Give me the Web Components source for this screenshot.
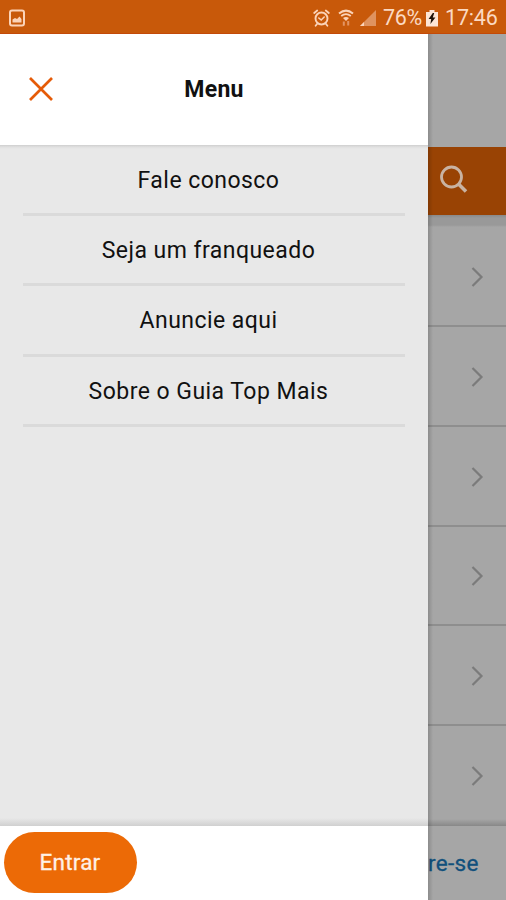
<!DOCTYPE html>
<html lang="pt-BR">
<head>
<meta charset="UTF-8">
<meta name="viewport" content="width=device-width, initial-scale=1">
<title>Guia Top Mais</title>
<style>
    body {
        margin: 0;
        font-family: Roboto, "Liberation Sans", sans-serif;
    }
</style>
</head>
<body>
<app-shell>
    <status-bar slot="status" battery="76%" time="17:46"></status-bar>
    <side-menu slot="menu" heading="Menu">
        <menu-item>Fale conosco</menu-item>
        <menu-item>Seja um franqueado</menu-item>
        <menu-item>Anuncie aqui</menu-item>
        <menu-item>Sobre o Guia Top Mais</menu-item>
        <pill-button slot="footer">Entrar</pill-button>
    </side-menu>
    <dimmed-page slot="page">
        <list-row></list-row>
        <list-row></list-row>
        <list-row></list-row>
        <list-row></list-row>
        <list-row></list-row>
        <list-row></list-row>
        <span slot="footer">re-se</span>
    </dimmed-page>
</app-shell>

<script>
class AppShell extends HTMLElement {
    connectedCallback() {
        this.attachShadow({ mode: 'open' });
        this.shadowRoot.innerHTML = `
            <style>
                :host {
                    display: grid;
                    grid-template: 34px 1fr / 428px 1fr;
                    height: 100vh;
                    overflow: hidden;
                }
                slot[name="status"]::slotted(*) {
                    grid-column: 1 / -1;
                }
            </style>
            <slot name="status"></slot>
            <slot name="menu"></slot>
            <slot name="page"></slot>
        `;
    }
}
customElements.define('app-shell', AppShell);

class StatusBar extends HTMLElement {
    connectedCallback() {
        this.attachShadow({ mode: 'open' });
        this.shadowRoot.innerHTML = `
            <style>
                :host {
                    display: flex;
                    align-items: center;
                    box-sizing: border-box;
                    padding: 2px 8px 0 8px;
                    background: #c8590a;
                    border-bottom: 1px solid #c34a08;
                    color: #fbd9c2;
                    font-size: 21.5px;
                    line-height: 31px;
                }
                svg {
                    display: block;
                    flex: none;
                }
                .picture {
                    margin-right: auto;
                }
                .alarm {
                    margin-right: 8px;
                }
                .wifi {
                    margin-right: 5px;
                }
                .signal {
                    margin-right: 6px;
                }
                .battery {
                    margin: 0 7px 0 4px;
                }
                .level {
                    width: 39px;
                    letter-spacing: -0.35px;
                    white-space: nowrap;
                }
                .time {
                    width: 53px;
                    letter-spacing: -0.2px;
                    white-space: nowrap;
                }
            </style>
            <svg class="picture" width="18" height="18" viewBox="0 0 18 18">
                <rect x="2" y="1.5" width="14" height="15" rx="2" fill="none" stroke="#fbd3b8" stroke-width="2"/>
                <path d="M4.5 13.5V10.5L7 9L9 10L11.5 7.5L13.5 10V13.5Z" fill="#fbd3b8"/>
            </svg>
            <svg class="alarm" width="17" height="18" viewBox="0 0 17 18" fill="none" stroke="#fbd3b8" stroke-linecap="round">
                <circle cx="8.5" cy="9.5" r="6" stroke-width="1.9"/>
                <path d="M1.2 4L4.2 1.5M15.8 4L12.8 1.5M4 15L2.6 16.7M13 15L14.4 16.7" stroke-width="1.8"/>
                <path d="M5.8 9L8.2 11L11.2 8" stroke-width="1.6"/>
            </svg>
            <svg class="wifi" width="16" height="18" viewBox="0 0 16 18" fill="none" stroke="#fbd3b8">
                <path d="M1 4.5Q8 -1.3 15 4.5" stroke-width="2"/>
                <path d="M3.2 7Q8 3.2 12.8 7" stroke-width="1.8"/>
                <path d="M5 9Q8 6.8 11 9L8 12Z" fill="#fbd3b8" stroke="none"/>
                <path d="M5.8 16.8V12.5M10.2 12V16.5" stroke="#e39463" stroke-width="2"/>
            </svg>
            <svg class="signal" width="18" height="18" viewBox="0 0 18 18">
                <path d="M17 1V17H1Z" fill="#df935f"/>
                <path d="M5 13V17H1Z" fill="#fbd3b8"/>
            </svg>
            <span class="level">${this.getAttribute('battery')}</span>
            <svg class="battery" width="12" height="18" viewBox="0 0 12 18">
                <path d="M3.5 1H8.5V3H12V17.5H0V3H3.5Z" fill="#fde6d5"/>
                <path d="M6.8 4L2.6 10H5.2L4.4 15L9.4 8.5H6.8L8.2 4Z" fill="#1d1208"/>
            </svg>
            <span class="time">${this.getAttribute('time')}</span>
        `;
    }
}
customElements.define('status-bar', StatusBar);

class SideMenu extends HTMLElement {
    connectedCallback() {
        this.attachShadow({ mode: 'open' });
        this.shadowRoot.innerHTML = `
            <style>
                :host {
                    display: flex;
                    flex-direction: column;
                    background: #e8e8e8;
                    color: #111;
                }
                header {
                    display: grid;
                    grid-template-columns: 82px 1fr 82px;
                    align-items: center;
                    justify-items: center;
                    height: 110.5px;
                    background: #fff;
                }
                h1 {
                    margin: 0;
                    padding-top: 2px;
                    font-size: 23px;
                    font-weight: 700;
                    letter-spacing: 0.3px;
                    line-height: 28px;
                }
                nav {
                    flex: 1;
                    padding: 1px 23px 0;
                    background: linear-gradient(#cfcfcf, #e0e0e0 2px, #e8e8e8 4px, #e8e8e8 calc(100% - 8px), #d0d0d0);
                }
                footer {
                    height: 74px;
                    box-sizing: border-box;
                    padding: 6px 3.5px;
                    background: #fff;
                }
            </style>
            <header>
                <svg width="24" height="24" viewBox="0 0 24 24">
                    <path d="M1 1L23 23M23 1L1 23" stroke="#e55b08" stroke-width="2.7"/>
                </svg>
                <h1>${this.getAttribute('heading')}</h1>
            </header>
            <nav><slot></slot></nav>
            <footer><slot name="footer"></slot></footer>
        `;
    }
}
customElements.define('side-menu', SideMenu);

class MenuItem extends HTMLElement {
    connectedCallback() {
        this.attachShadow({ mode: 'open' });
        this.shadowRoot.innerHTML = `
            <style>
                :host {
                    display: flex;
                    align-items: center;
                    justify-content: center;
                    box-sizing: border-box;
                    height: 70.4px;
                    padding: 2px 11px 0 0;
                    border-bottom: 3px solid #dadada;
                    font-size: 23px;
                    letter-spacing: 0.46px;
                    white-space: nowrap;
                }
            </style>
            <slot></slot>
        `;
    }
}
customElements.define('menu-item', MenuItem);

class PillButton extends HTMLElement {
    connectedCallback() {
        this.attachShadow({ mode: 'open' });
        this.shadowRoot.innerHTML = `
            <style>
                :host {
                    display: block;
                    width: 133px;
                }
                button {
                    display: block;
                    width: 100%;
                    height: 61px;
                    padding: 0;
                    border: 0;
                    border-radius: 31px;
                    background: #ec6a06;
                    color: #fff1e6;
                    font: 400 22.5px/61px Roboto, "Liberation Sans", sans-serif;
                    letter-spacing: 0.2px;
                    -webkit-text-stroke: 0.3px #fff1e6;
                }
            </style>
            <button><slot></slot></button>
        `;
    }
}
customElements.define('pill-button', PillButton);

class DimmedPage extends HTMLElement {
    connectedCallback() {
        this.attachShadow({ mode: 'open' });
        this.shadowRoot.innerHTML = `
            <style>
                :host {
                    display: flex;
                    flex-direction: column;
                    position: relative;
                    background: #a6a6a6;
                    overflow: hidden;
                }
                /* shadow the open drawer casts on the page */
                :host::after {
                    content: "";
                    position: absolute;
                    inset: 0 auto 0 0;
                    width: 5px;
                    background: linear-gradient(90deg, rgba(0, 0, 0, 0.16), rgba(0, 0, 0, 0));
                }
                .top {
                    height: 113px;
                }
                .search {
                    height: 68px;
                    box-sizing: border-box;
                    padding: 18px 0 0 11px;
                    background: #994304;
                }
                .search svg {
                    display: block;
                }
                .list {
                    flex: 1;
                    padding-top: 12px;
                    background: linear-gradient(#898989, #999 3px, #999 10px, #a6a6a6 12px, #a6a6a6 calc(100% - 7px), #888);
                }
                footer {
                    height: 74px;
                    line-height: 75px;
                    color: #11507c;
                    font-size: 22.5px;
                    letter-spacing: 0.3px;
                    -webkit-text-stroke: 0.3px #11507c;
                }
            </style>
            <div class="top"></div>
            <div class="search">
                <svg width="30" height="30" viewBox="0 0 30 30" fill="none" stroke="#c9b3a2">
                    <circle cx="12.5" cy="12" r="10" stroke-width="2.8"/>
                    <path d="M19.5 19L27 26.5" stroke-width="3.6"/>
                </svg>
            </div>
            <div class="list"><slot></slot></div>
            <footer><slot name="footer"></slot></footer>
        `;
    }
}
customElements.define('dimmed-page', DimmedPage);

class ListRow extends HTMLElement {
    connectedCallback() {
        this.attachShadow({ mode: 'open' });
        this.shadowRoot.innerHTML = `
            <style>
                :host {
                    display: flex;
                    align-items: center;
                    justify-content: flex-end;
                    box-sizing: border-box;
                    height: 99.85px;
                    padding: 2px 22px 0 0;
                    border-bottom: 2px solid #8e8e8e;
                }
                :host(:last-of-type) {
                    height: 97px;
                    border-bottom: 0;
                }
            </style>
            <svg width="13" height="20" viewBox="0 0 13 20">
                <path d="M1.5 1L10.5 10L1.5 19" fill="none" stroke="#7b7b7b" stroke-width="2.2"/>
            </svg>
        `;
    }
}
customElements.define('list-row', ListRow);
</script>
</body>
</html>
